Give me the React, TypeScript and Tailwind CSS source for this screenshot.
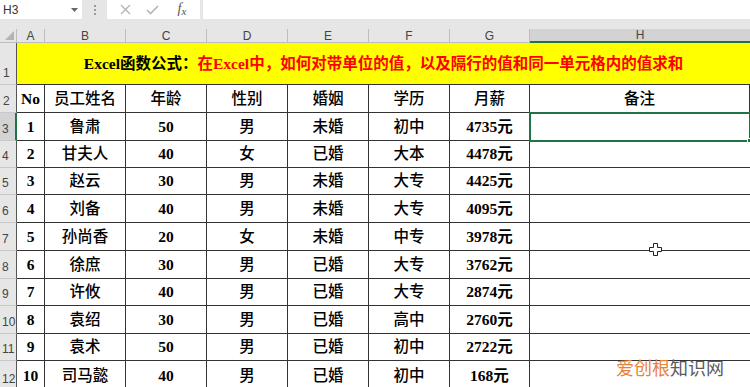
import React from 'react';

const cols = ['A', 'B', 'C', 'D', 'E', 'F', 'G', 'H'];

// data rows 3..12
const rows = [
  ['1', '鲁肃', '50', '男', '未婚', '初中', '4735元'],
  ['2', '甘夫人', '40', '女', '已婚', '大本', '4478元'],
  ['3', '赵云', '30', '男', '未婚', '大专', '4425元'],
  ['4', '刘备', '40', '男', '未婚', '大专', '4095元'],
  ['5', '孙尚香', '20', '女', '未婚', '中专', '3978元'],
  ['6', '徐庶', '30', '男', '已婚', '大专', '3762元'],
  ['7', '许攸', '40', '男', '已婚', '大专', '2874元'],
  ['8', '袁绍', '30', '男', '已婚', '高中', '2760元'],
  ['9', '袁术', '50', '男', '已婚', '初中', '2722元'],
  ['10', '司马懿', '40', '男', '已婚', '初中', '168元'],
];

const headers = ['No', '员工姓名', '年龄', '性别', '婚姻', '学历', '月薪', '备注'];

const serif = "font-['Liberation_Serif','Noto_Sans_CJK_SC',serif]";
const ui = "font-['Liberation_Sans','Noto_Sans',sans-serif]";

function FormulaBar() {
  return (
    <div className="flex h-[29px] bg-[#e6e6e6] items-start">
      {/* Name box */}
      <div className={`flex items-center justify-between w-[82px] h-[19px] bg-white pl-[3px] pr-[4px] text-[12px] text-[#333] ${ui}`}>
        <span>H3</span>
        <svg width="7" height="4" viewBox="0 0 7 4">
          <path d="M0 0 L7 0 L3.5 4 Z" fill="#666" />
        </svg>
      </div>
      {/* dots */}
      <div className="w-[25px] h-[19px] flex flex-col items-center justify-center gap-[2px]">
        <span className="block w-[2px] h-[2px] bg-[#9a9a9a]" />
        <span className="block w-[2px] h-[2px] bg-[#9a9a9a]" />
        <span className="block w-[2px] h-[2px] bg-[#9a9a9a]" />
      </div>
      {/* cancel / enter / fx */}
      <div className="flex items-center w-[93px] h-[19px] bg-white">
        <div className="w-[30px] flex justify-center pl-[6px]">
          <svg width="11" height="11" viewBox="0 0 11 11">
            <path d="M1 1 L10 10 M10 1 L1 10" stroke="#b5b5b5" strokeWidth="1.4" />
          </svg>
        </div>
        <div className="w-[30px] flex justify-center">
          <svg width="13" height="10" viewBox="0 0 13 10">
            <path d="M1 5 L4.5 8.5 L12 1" stroke="#b5b5b5" strokeWidth="1.6" fill="none" />
          </svg>
        </div>
        <div className={`w-[30px] flex justify-center italic text-[14px] leading-none text-[#555] ${serif}`}>
          <span>f</span>
          <span className="text-[11px] mt-[4px]">x</span>
        </div>
      </div>
      <div className="w-[3px]" />
      <div className="flex-1 h-[19px] bg-white" />
    </div>
  );
}

export default function App() {
  return (
    <div className="relative w-[750px] h-[387px] overflow-hidden bg-white">
      <FormulaBar />

      <div
        className={`grid grid-cols-[17px_28px_81px_81px_81px_81px_81px_80px_220px] grid-rows-[14px_42px_28px_28px_27px_27px_28px_28px_28px_27px_28px_27px_30px] ${serif} text-black`}
      >
        {/* corner */}
        <div className="relative bg-[#e6e6e6] border-r border-b border-[#bdbdbd]">
          <svg className="absolute right-[2px] bottom-[2px]" width="9" height="9" viewBox="0 0 9 9">
            <path d="M9 0 L9 9 L0 9 Z" fill="#b3b3b3" />
          </svg>
        </div>
        {cols.map((c) =>
          c === 'H' ? (
            <div
              key={c}
              className={`flex items-center justify-center bg-[#d3d3d3] border-b-2 border-b-[#217346] text-[12px] text-[#444] ${ui}`}
            >
              {c}
            </div>
          ) : (
            <div
              key={c}
              className={`flex items-center justify-center bg-[#e6e6e6] border-r border-b border-[#bdbdbd] text-[12px] text-[#444] ${ui}`}
            >
              {c}
            </div>
          )
        )}

        {/* row 1: title */}
        <div className={`flex items-end pl-[3px] pb-[2px] bg-[#e6e6e6] border-r border-b border-r-[#555] border-b-[#c9c9c9] text-[12px] text-[#444] ${ui}`}>
          1
        </div>
        <div className="col-span-8 flex items-center justify-center bg-[#ffff00] border-b border-[#333] text-[15.5px] font-bold">
          <span className="text-black">Excel函数公式：</span>
          <span className="text-[#ff0000]">在Excel中，如何对带单位的值，以及隔行的值和同一单元格内的值求和</span>
        </div>

        {/* row 2: headers */}
        <div className={`flex items-end pl-[3px] pb-[2px] bg-[#e6e6e6] border-r border-b border-r-[#555] border-b-[#c9c9c9] text-[12px] text-[#444] ${ui}`}>
          2
        </div>
        {headers.map((h, i) => (
          <div
            key={h}
            className={`flex items-center justify-center border-r border-b border-[#333] text-[15.5px] ${i === 0 ? 'font-bold' : 'font-medium'}`}
          >
            {h}
          </div>
        ))}

        {/* data rows */}
        {rows.map((r, ri) => {
          const n = ri + 3;
          const selected = n === 3;
          return (
            <React.Fragment key={n}>
              <div
                className={`flex items-end pl-[2px] pb-[2px] border-b text-[12px] text-[#444] ${ui} ${
                  selected
                    ? 'bg-[#d3d3d3] border-r-2 border-r-[#217346] border-b-[#c9c9c9]'
                    : 'bg-[#e6e6e6] border-r border-r-[#555] border-b-[#c9c9c9]'
                }`}
              >
                {n}
              </div>
              {r.map((v, ci) => (
                <div
                  key={ci}
                  className={`flex items-center justify-center border-r border-b border-[#333] text-[15.5px] ${
                    ci === 0 || ci === 2 || ci === 6 ? 'font-bold' : 'font-medium'
                  }`}
                >
                  {v}
                </div>
              ))}
              {selected ? (
                <div className="relative border-b border-[#333] outline-2 outline-[#217346] -outline-offset-1">
                  <span className="absolute right-[-2px] bottom-[-3px] w-[5px] h-[5px] bg-[#217346] border border-white" />
                </div>
              ) : (
                <div className="border-b border-[#333]" />
              )}
            </React.Fragment>
          );
        })}
      </div>

      {/* mouse cursor */}
      <svg className="absolute left-[649px] top-[243px]" width="13" height="13" viewBox="0 0 13 13">
        <path
          d="M4.5 0.5 H8.5 V4.5 H12.5 V8.5 H8.5 V12.5 H4.5 V8.5 H0.5 V4.5 H4.5 Z"
          fill="#fff"
          stroke="#222"
          strokeWidth="1"
        />
      </svg>

      {/* watermark */}
      <div className="absolute left-[616px] top-[358px] flex text-[18px] leading-none font-['Noto_Sans_CJK_SC',sans-serif]">
        <span className="text-[#e8823a]">爱创根</span>
        <span className="text-[#5a5a5a]">知识网</span>
      </div>
    </div>
  );
}
